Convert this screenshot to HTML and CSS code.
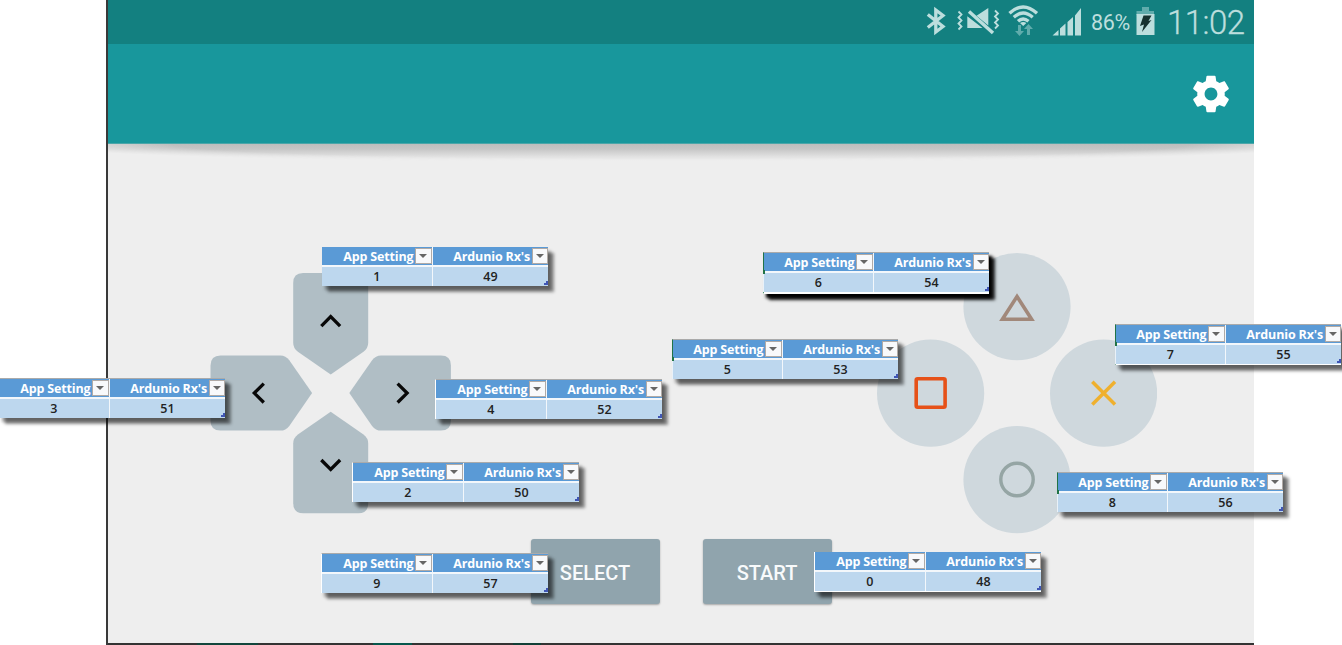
FILE: index.html
```html
<!DOCTYPE html>
<html lang="en">
<head>
<meta charset="utf-8">
<title>Controller mapping</title>
<link rel="stylesheet" href="styles.css">
</head>
<body>
<main class="page">
  <div class="screen">
    <div class="status">
      <svg class="icons" width="176" height="43" viewBox="0 0 176 43">
        <g fill="none" stroke="#bcdedd">
          <path stroke-width="3.300" d="M3.800 14.500 L19 26.500 L11.800 32 V10 L19 15.500 L3.800 27.500"/>
          <path stroke-width="1.800" d="M34.500 11.500 l3 3 -3 3 3 3 -3 3 3 3 -3 3 M71 10.500 l3 3 -3 3 3 3 -3 3 3 3 -3 3"/>
          <path stroke-width="3.400" d="M45 11.500 L69 33"/>
          <path stroke-width="3.300" d="M85.500 13.300 Q99 .500 113 13.300 M89.800 17.300 Q99 8.800 108.700 17.300 M94 21.300 Q99 16.500 104.500 21.300"/>
        </g>
        <g fill="#bcdedd">
          <path d="M43.300 16.200 L58.500 28 H43.300z M52.500 15.700 L64.300 8 V25.500z M96 23 Q99.200 21 102.400 23 L99.200 26z"/>
          <path d="M128.500 35.500 L134.500 30 V35.500z M136 28.500 L141.500 23.500 V35.500 H136z M143.500 22 L149 17 V35.500 H143.500z M151 15.500 L157 8 V35.500 H151z"/>
        </g>
        <path fill="#60acac" d="M94 25 h3 v6 h3 l-4.500 5 -4.500-5 h3z M103 35 v-6 h-3 l4.500-5 4.500 5 h-3 v6z"/>
      </svg>
      <span class="percent">86%</span>
      <svg class="battery" width="19" height="30" viewBox="0 0 19 30">
        <path fill="#60acac" d="M6 0h7v4h5v4H.500V4H6z"/>
        <path fill="#bcdedd" d="M.500 7H18.500v21H.500z"/>
        <path fill="#16312f" d="M7.500 8.500h8l-3 5.500 3-1L6 25l2-7.500-4 1.500z"/>
      </svg>
      <span class="clock">11:02</span>
    </div>
    <header class="toolbar">
      <svg width="44" height="44" viewBox="0 0 24 24"><path fill="#fff" d="M19.430 12.980c.040-.320.070-.640.070-.980s-.030-.660-.070-.980l2.110-1.650c.190-.150.240-.420.120-.640l-2-3.460c-.120-.220-.390-.300-.610-.220l-2.490 1c-.520-.400-1.080-.730-1.690-.980l-.380-2.650C14.460 2.180 14.250 2 14 2h-4c-.250 0-.460.180-.490.420l-.380 2.650c-.610.250-1.170.590-1.690.980l-2.490-1c-.230-.090-.490 0-.610.220l-2 3.460c-.130.220-.070.490.120.640l2.110 1.650c-.040.320-.070.650-.070.980s.030.660.070.980l-2.110 1.650c-.190.150-.240.420-.120.640l2 3.460c.120.220.390.300.610.220l2.490-1c.520.400 1.080.730 1.690.980l.380 2.650c.030.240.240.420.490.420h4c.250 0 .460-.180.490-.420l.380-2.650c.610-.250 1.170-.590 1.690-.980l2.490 1c.230.090.490 0 .610-.220l2-3.460c.120-.220.070-.490-.120-.640l-2.110-1.650zM12 15.500c-1.930 0-3.500-1.570-3.500-3.500s1.570-3.500 3.500-3.500 3.500 1.570 3.500 3.500-1.570 3.500-3.500 3.500z"/></svg>
    </header>
    <div class="shade"></div>
    <section class="pads">
      <svg width="242" height="243" viewBox="0 0 242 243">
        <defs>
          <g id="arm">
            <path fill="#b0bec5" d="M93 .5H148Q158.200.5 158.200 10.500V70.300Q158.200 75.800 153.500 79.300L120.700 102.100L87.900 79.300Q83.200 75.800 83.200 70.300V10.500Q83.200.5 93 .5z"/>
            <path fill="none" stroke="#080808" stroke-width="3.300" d="M111.300 53.800L120.700 44.300L130.100 53.800"/>
          </g>
        </defs>
        <g transform="translate(0 .4)">
          <use href="#arm"/>
          <use href="#arm" transform="rotate(90 120.700 120.700)"/>
          <use href="#arm" transform="rotate(180 120.700 120.700)"/>
          <use href="#arm" transform="rotate(270 120.700 120.700)"/>
        </g>
      </svg>
      <svg width="280" height="281" viewBox="0 0 280 281">
        <g fill="#cfd8dd">
          <circle cx="140" cy="53.700" r="53.600"/><circle cx="53.600" cy="140.200" r="53.600"/>
          <circle cx="226.600" cy="140.200" r="53.600"/><circle cx="140" cy="226.700" r="53.600"/>
        </g>
        <g fill="none">
          <path stroke="#a1887a" stroke-width="3.600" d="M140 43.500L154.600 66.200H125.400z"/>
          <rect stroke="#e65118" stroke-width="3.600" x="39.200" y="125.700" width="28.900" height="28.600" rx="1.500"/>
          <path stroke="#efb02e" stroke-width="3.500" d="M215.300 128.700L238 151.500M238 128.700L215.300 151.500"/>
          <circle stroke="#95a5a4" stroke-width="3.400" cx="140" cy="226.500" r="16.200"/>
        </g>
      </svg>
    </section>
    <div class="actions">
      <button class="action">SELECT</button>
      <button class="action">START</button>
    </div>
    <div class="edge"></div>
  </div>

  <div class="note n1"><div class="head"><span>App Setting</span><i></i></div><div class="head"><span>Ardunio Rx's</span><i></i></div><div class="cell">1</div><div class="cell last">49</div></div>
  <div class="note ruled cut n2"><div class="head"><span>App Setting</span><i></i></div><div class="head"><span>Ardunio Rx's</span><i></i></div><div class="cell">2</div><div class="cell last">50</div></div>
  <div class="note ruled n3"><div class="head"><span>App Setting</span><i></i></div><div class="head"><span>Ardunio Rx's</span><i></i></div><div class="cell">3</div><div class="cell last">51</div></div>
  <div class="note ruled cut n4"><div class="head"><span>App Setting</span><i></i></div><div class="head"><span>Ardunio Rx's</span><i></i></div><div class="cell">4</div><div class="cell last">52</div></div>
  <div class="note ruled green n5"><div class="head"><span>App Setting</span><i></i></div><div class="head"><span>Ardunio Rx's</span><i></i></div><div class="cell">5</div><div class="cell last">53</div></div>
  <div class="note ruled green base strong n6"><div class="head"><span>App Setting</span><i></i></div><div class="head"><span>Ardunio Rx's</span><i></i></div><div class="cell">6</div><div class="cell last">54</div></div>
  <div class="note ruled green base n7"><div class="head"><span>App Setting</span><i></i></div><div class="head"><span>Ardunio Rx's</span><i></i></div><div class="cell">7</div><div class="cell last">55</div></div>
  <div class="note ruled green n8"><div class="head"><span>App Setting</span><i></i></div><div class="head"><span>Ardunio Rx's</span><i></i></div><div class="cell">8</div><div class="cell last">56</div></div>
  <div class="note ruled cut n9"><div class="head"><span>App Setting</span><i></i></div><div class="head"><span>Ardunio Rx's</span><i></i></div><div class="cell">9</div><div class="cell last">57</div></div>
  <div class="note cut base n0"><div class="head"><span>App Setting</span><i></i></div><div class="head"><span>Ardunio Rx's</span><i></i></div><div class="cell">0</div><div class="cell last">48</div></div>
</main>
</body>
</html>
```
FILE: styles.css
```css
* { box-sizing: border-box; }
body { margin: 0; background: #fff; font-family: Roboto, sans-serif; }
.page { position: relative; width: 1342px; height: 645px; overflow: hidden; }
.screen {
  display: flex; flex-direction: column;
  width: 1148px; height: 645px; margin-left: 106px;
  border-left: 2px solid #393939; background: #eee;
}
.status {
  display: flex; align-items: flex-start; flex: none;
  height: 44px; padding-left: 816px; background: #138080; color: #bcdedd;
}
.status svg { flex: none; }
.percent { width: 45px; margin-left: -9px; padding-top: 9px; font-size: 21.500px; line-height: 27px; letter-spacing: -.3px; }
.battery { margin: 7px 0 0; }
.clock { margin-left: 12px; font-size: 33px; line-height: 46px; font-weight: 300; letter-spacing: -.5px; white-space: nowrap; -webkit-text-stroke: .3px #bcdedd; }
.toolbar {
  display: flex; justify-content: flex-end; align-items: center; flex: none;
  height: 100px; padding-right: 21px; background: #18979c; border-bottom: 1px solid #4ba6a9;
}
.shade {
  flex: none; height: 17px;
  background: linear-gradient(#bdbdbd, #c6c6c6 30%, #e2e2e2 75%, #eee);
  -webkit-mask-image: radial-gradient(ellipse 57% 110% at 50% 0, #000 78%, transparent 100%);
  mask-image: radial-gradient(ellipse 57% 110% at 50% 0, #000 78%, transparent 100%);
}
.pads { display: flex; justify-content: space-between; flex: none; height: 378px; padding: 92px 97px 0 102px; }
.pads svg:first-child { margin-top: 19px; }
.actions { display: flex; gap: 43px; padding-left: 422.500px; flex: 1; }
.action {
  width: 129px; height: 65px; padding: 2px 0 0; border: 0; border-radius: 3px;
  background: #90a4ad; color: #f8fafb; font: 500 20px Roboto, sans-serif;
  box-shadow: 0 1px 2px rgba(0, 0, 0, .3);
}
.edge {
  flex: none; height: 2px;
  background: linear-gradient(90deg, #333 89px, #12463c 89px 150px, #333 150px 265px, #07574c 265px 304px, #333 304px 405px, #123f36 405px 433px, #333 433px);
}

/* Mapping notes laid over the controller */
.note {
  position: absolute; display: grid;
  grid-template: 17.500px 19px / 109.500px 115px; gap: 2.500px 1.500px;
  width: 226px; background: #f3f7fb;
  box-shadow: 3px 4px 3px rgba(0, 0, 0, .35), 6px 6px 3px rgba(0, 0, 0, .4);
  font-family: "Open Sans", sans-serif;
}
.head { display: flex; justify-content: flex-end; align-items: center; gap: 1.500px; background: #5a9ad6; }
.head span {
  color: #fff; font-size: 12.500px; font-weight: 700; line-height: 17px;
  white-space: nowrap; padding-top: 2px; letter-spacing: -.15px;
}
.head i {
  display: flex; align-items: center; justify-content: center; flex: none;
  width: 16.500px; height: 16.500px; border: 1px solid #b0aaa6; background: #f8f9fb;
}
.head i::after { content: ""; border: 4px solid transparent; border-top-color: #666; border-bottom: 0; }
.cell { background: #bdd7ee; color: #222; font-size: 12.500px; font-weight: 600; line-height: 19px; text-align: center; }
.last { background: linear-gradient(#4056b5, #4056b5) right 0 bottom 1px / 4px 2px no-repeat, linear-gradient(#4056b5, #4056b5) right 0 bottom 3px / 2px 2px no-repeat, #bdd7ee; }
.ruled { border-top: 1px solid #aaa; }
.cut { border-left: 1px solid #fff; width: 227px; }
.green { grid-template-columns: 108.500px 115px; border-left: 1px solid #217346; }
.green::before { content: ""; position: absolute; left: -1px; top: 17px; width: 2px; height: 4px; background: #217346; }
.green::after { content: ""; position: absolute; left: -1px; top: 21px; width: 1px; bottom: 0; background: #e9f1f8; }
.base { border-bottom: 1px solid #fff; }
.strong { border-bottom-width: 2px; box-shadow: 3px 4px 3px #000, 6px 6px 3px rgba(0, 0, 0, .8); }
.n1 { left: 322px; top: 247px; }
.n2 { left: 352px; top: 462px; }
.n3 { left: -1px; top: 378px; }
.n4 { left: 435px; top: 379px; }
.n5 { left: 672px; top: 339px; }
.n6 { left: 763px; top: 252px; }
.n7 { left: 1115px; top: 324px; }
.n8 { left: 1057px; top: 472px; }
.n9 { left: 321px; top: 553px; }
.n0 { left: 814px; top: 552px; }
```
